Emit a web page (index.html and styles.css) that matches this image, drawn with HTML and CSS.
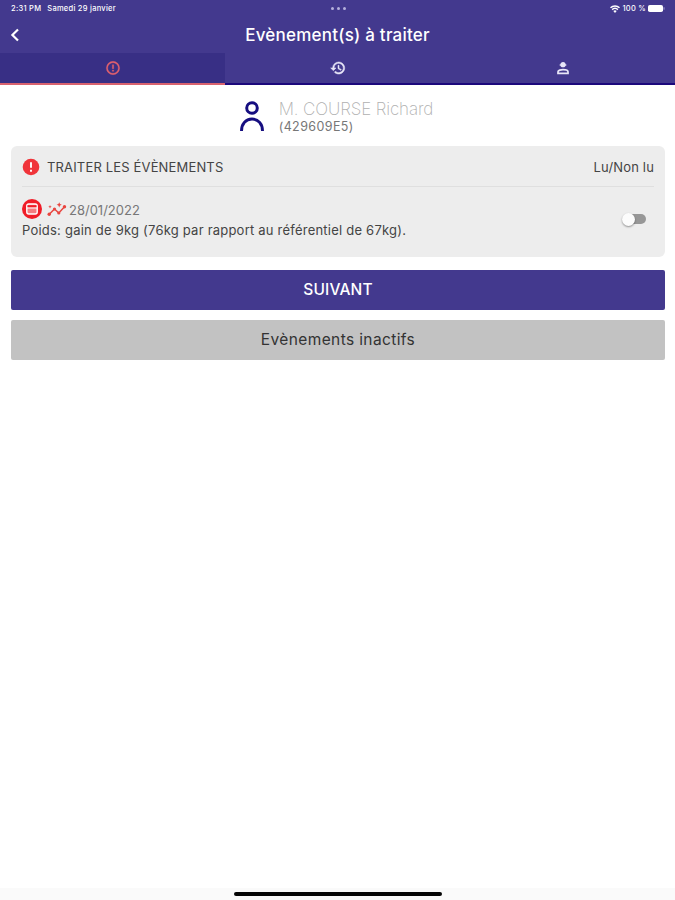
FILE: index.html
```html
<!doctype html>
<html lang="fr">
<head>
    <meta charset="utf-8">
    <title>Evènement(s) à traiter</title>
    <link rel="stylesheet" href="styles.css">
</head>
<body>
    <header>
        <div class="status-bar">
            <div class="status-left"><span>2:31 PM</span><span class="status-date">Samedi 29 janvier</span></div>
            <div class="status-dots"><i></i><i></i><i></i></div>
            <div class="status-right">
                <svg width="10" height="8" viewBox="0 0 20 16"><path fill="#fff" d="M10 16l3.400-4a5 5 0 0 0-6.800 0zM5.200 10.400a7 7 0 0 1 9.600 0l1.900-2.200a10 10 0 0 0-13.400 0zM2 6.700a12 12 0 0 1 16 0l2-2.400a15 15 0 0 0-20 0z"/></svg>
                <span>100 %</span>
                <svg class="battery" width="17" height="7" viewBox="0 0 17 7"><rect width="15" height="7" rx="1.800" fill="#fff"/><path d="M16 2.300v2.400" stroke="#aaa5d5"/></svg>
            </div>
        </div>

        <div class="title-bar">
            <svg class="back" width="10" height="14" viewBox="0 0 10 14"><path d="M9 1.500L3.400 7 9 12.500" fill="none" stroke="#fff" stroke-width="2.200"/></svg>
            <h1>Evènement(s) à traiter</h1>
        </div>

        <nav class="tabs">
            <a class="tab active">
                <svg width="16" height="16" viewBox="0 0 24 24"><path fill="currentColor" stroke="currentColor" stroke-width=".5" d="M11 15h2v2h-2zm0-8h2v6h-2zm1-5a10 10 0 1 0 0 20 10 10 0 0 0 0-20zm0 18a8 8 0 1 1 0-16 8 8 0 0 1 0 16z"/></svg>
            </a>
            <a class="tab">
                <svg width="16" height="16" viewBox="0 0 24 24"><path fill="currentColor" stroke="currentColor" stroke-width=".8" d="M13 3a9 9 0 0 0-9 9H1l3.900 3.900.1.100L9 12H6a7 7 0 1 1 2.060 4.940l-1.420 1.420A9 9 0 1 0 13 3zm-1 5v5l4.280 2.540.720-1.210-3.500-2.080V8z"/></svg>
            </a>
            <a class="tab">
                <svg width="16" height="16" viewBox="0 0 24 24"><g fill="none" stroke="currentColor" stroke-width="2.600"><circle cx="12" cy="7" r="2.600" fill="currentColor"/><path d="M7 7.500h10" stroke-width="2"/><path d="M4.500 20v-2.200c0-2.400 4.500-3.300 7.500-3.300s7.500.9 7.500 3.300V20z"/></g></svg>
            </a>
        </nav>
    </header>

    <main>
        <div class="patient">
            <svg width="26" height="32" viewBox="0 0 26 32"><g fill="none" stroke="#160e80" stroke-width="3"><circle cx="13" cy="8" r="5.300"/><path d="M2.500 31c0-7 4.200-12 10.500-12s10.500 5 10.500 12"/></g></svg>
            <div class="patient-text">
                <div class="patient-name">M. COURSE Richard</div>
                <div class="patient-id">(429609E5)</div>
            </div>
        </div>

        <section class="card">
            <div class="card-header">
                <svg width="18" height="18" viewBox="0 0 18 18"><circle cx="9" cy="9" r="8.300" fill="#f0343a"/><path d="M9 4.200v5.600M9 11.800v2" stroke="#fff" stroke-width="1.900"/></svg>
                <h2>TRAITER LES ÉVÈNEMENTS</h2>
                <span class="read-label">Lu/Non lu</span>
            </div>
            <div class="event">
                <div>
                    <div class="event-date">
                        <svg width="20" height="20" viewBox="0 0 20 20"><circle cx="10" cy="10" r="10" fill="#f01c27"/><rect x="4.800" y="5" width="10.400" height="10" rx="2" fill="#f47c80" stroke="#fff" stroke-width="1.400"/><path d="M5.500 6.200h9v2.200h-9z" fill="#f01c27"/><path d="M5 9h10" stroke="#fff"/></svg>
                        <svg class="trend" width="20" height="16" viewBox="0 0 20 16"><path d="M2 13.500L7.500 8l4.300 4L17.500 5.800" fill="none" stroke="#e9453f" stroke-width="1.500"/><g fill="#e9453f"><circle cx="2.200" cy="13.300" r="1.700"/><circle cx="7.500" cy="8" r="1.600"/><circle cx="11.800" cy="12" r="1.600"/><circle cx="17.500" cy="5.800" r="1.700"/><path d="M12.200 1.200l.8 1.800 1.800.8-1.800.8-.8 1.800-.8-1.800-1.800-.8 1.800-.8zM3 4l.5 1.200 1.200.5-1.200.5L3 7.400l-.5-1.200-1.200-.5 1.200-.5z"/></g></svg>
                        <span>28/01/2022</span>
                    </div>
                    <p>Poids: gain de 9kg (76kg par rapport au référentiel de 67kg).</p>
                </div>
                <div class="switch"></div>
            </div>
        </section>

        <button class="btn-next">SUIVANT</button>
        <button class="btn-inactive">Evènements inactifs</button>
    </main>

    <footer><div class="home-bar"></div></footer>
</body>
</html>
```
FILE: styles.css
```css
* {
    box-sizing: border-box;
}

body {
    margin: 0;
    height: 900px;
    display: flex;
    flex-direction: column;
    overflow: hidden;
    background-color: #fff;
    color: #444;
    font-family: Inter, "Liberation Sans", sans-serif;
}

svg {
    display: block;
    flex: none;
}

h1, h2, p {
    margin: 0;
}

/* Header */
header {
    height: 85px;
    background-color: #43398e;
    color: #fff;
}

.status-bar {
    display: grid;
    grid-template-columns: 1fr auto 1fr;
    align-items: center;
    height: 17px;
    padding: 0 10px 0 11px;
    font-size: 7.5px;
    font-weight: 500;
    letter-spacing: 0.27px;
}

.status-left {
    display: flex;
    gap: 6px;
}

.status-dots {
    display: flex;
    gap: 3px;
}

.status-dots i {
    width: 3px;
    height: 3px;
    border-radius: 50%;
    background-color: #b5b0dc;
}

.status-right {
    display: flex;
    justify-content: flex-end;
    align-items: center;
    gap: 2px;
}

.title-bar {
    display: grid;
    grid-template-columns: 20px 1fr 20px;
    align-items: center;
    height: 36px;
    padding: 0 9px;
}

h1 {
    font-size: 17px;
    font-weight: 500;
    letter-spacing: 0.22px;
    text-align: center;
}

.tabs {
    display: grid;
    grid-template-columns: repeat(3, 1fr);
    height: 32px;
}

.tab {
    display: flex;
    justify-content: center;
    align-items: center;
    border-bottom: 2px solid #1c087c;
    color: #e8e6f8;
}

.tab.active {
    background-color: #382f85;
    border-bottom-color: #d9626f;
    color: #e0606d;
}

/* Content */
main {
    flex: 1;
    padding: 0 10px 0 11px;
}

.patient {
    display: flex;
    justify-content: center;
    gap: 14px;
    height: 61px;
    padding: 15px 4px 0 0;
}

.patient-text {
    padding-top: 1px;
}

.patient-name {
    color: #b0b0b0;
    font-size: 17px;
    font-weight: 200;
    letter-spacing: -0.12px;
    line-height: 17px;
}

.patient-id {
    color: #777;
    font-size: 12.5px;
    letter-spacing: 0.4px;
    line-height: 18px;
}

.card {
    height: 111px;
    margin-bottom: 13px;
    padding: 0 11px;
    border-radius: 6px;
    background-color: #ededed;
}

.card-header {
    display: flex;
    align-items: center;
    gap: 7px;
    height: 41px;
    padding-top: 2px;
    border-bottom: 1px solid #dfdfdf;
    font-size: 13px;
    letter-spacing: 0.16px;
}

h2 {
    font-size: 13px;
    font-weight: 400;
}

.read-label {
    margin-left: auto;
}

.event {
    display: flex;
    justify-content: space-between;
    padding-top: 12px;
}

.event-date {
    display: flex;
    align-items: center;
    height: 20px;
    color: #777;
    font-size: 13px;
}

.event-date span {
    padding-top: 1px;
}

.trend {
    margin: 0 2px 0 5px;
}

.event p {
    font-size: 13px;
    letter-spacing: 0.22px;
    line-height: 22px;
}

.switch {
    position: relative;
    width: 22px;
    height: 10px;
    margin: 15px 8px 0 0;
    border-radius: 5px;
    background-color: #979797;
}

.switch::before {
    content: "";
    position: absolute;
    top: -1px;
    left: -2px;
    width: 13px;
    height: 13px;
    border-radius: 50%;
    background-color: #fcfcfc;
    box-shadow: 0 1px 2px rgba(0, 0, 0, 0.4);
}

button {
    display: block;
    width: 100%;
    height: 40px;
    margin-bottom: 10px;
    padding: 0 0 1px;
    border: none;
    border-radius: 2px;
    font-family: inherit;
    font-size: 15px;
}

.btn-next {
    background-color: #43398e;
    color: #fff;
    font-size: 15.5px;
    font-weight: 500;
    letter-spacing: 0.15px;
}

.btn-inactive {
    background-color: #c2c2c2;
    color: #333;
    font-size: 15.5px;
    letter-spacing: 0.38px;
}

/* Home indicator */
footer {
    display: flex;
    justify-content: center;
    height: 12px;
    padding-top: 4px;
    background-color: #fafafa;
}

.home-bar {
    width: 208px;
    height: 4px;
    border-radius: 2px;
    background-color: #050505;
}
```
